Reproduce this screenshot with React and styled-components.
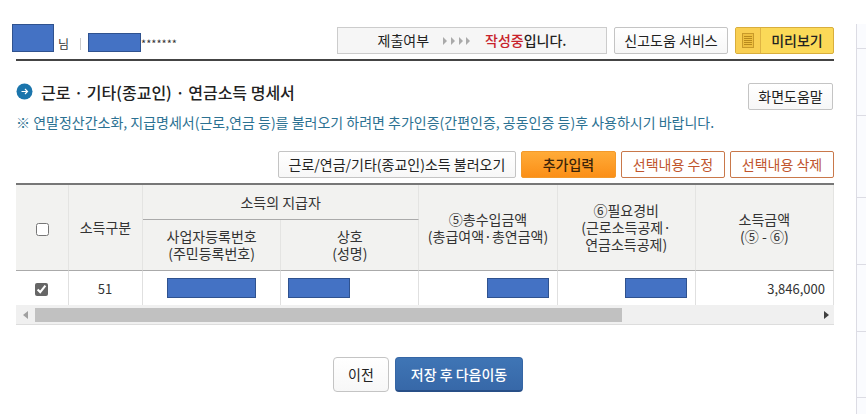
import React from "react";
import styled, { createGlobalStyle } from "styled-components";

const sideRows = [25, 67, 82, 67, 67, 66];

const App = () => {
  return (
    <>
      <GlobalStyle />
      <Page>
        <Main>
          <Header>
            <User>
              <Masked width={42} height={28} />
              <UserName>님</UserName>
              <Divider />
              <Masked width={53} height={19} />
              <Stars>*******</Stars>
            </User>
            <HeaderTools>
              <Status>
                <span>제출여부</span>
                <Arrows viewBox="0 0 28 8" aria-hidden="true">
                  <path d="M0 0l4 4-4 4zM8 0l4 4-4 4zM16 0l4 4-4 4zM23 0l4 4-4 4z" />
                </Arrows>
                <strong>
                  <em>작성중</em>입니다.
                </strong>
              </Status>
              <Button width={114}>신고도움 서비스</Button>
              <PreviewButton>
                <PreviewIcon>
                  <svg width="12" height="15" viewBox="0 0 12 15">
                    <rect x=".5" y=".5" width="11" height="14" fill="#efc040" stroke="#c99a2a" />
                    <path d="M2 3.5h8M2 5.5h8M2 7.5h8M2 9.5h8M2 11.5h8" stroke="#b98a1c" />
                  </svg>
                </PreviewIcon>
                <PreviewText>미리보기</PreviewText>
              </PreviewButton>
            </HeaderTools>
          </Header>

          <TitleRow>
            <svg width="17" height="17" viewBox="0 0 17 17" aria-hidden="true">
              <circle cx="8.5" cy="8.5" r="8" fill="#1b75ac" />
              <path
                d="M5.5 8.5h6M9 6l2.5 2.5L9 11"
                fill="none"
                stroke="#fff"
                strokeWidth="1.2"
              />
            </svg>
            <Title>근로 · 기타(종교인) · 연금소득 명세서</Title>
            <Button width={85}>화면도움말</Button>
          </TitleRow>
          <Notice>
            ※ 연말정산간소화, 지급명세서(근로,연금 등)를 불러오기 하려면
            추가인증(간편인증, 공동인증 등)후 사용하시기 바랍니다.
          </Notice>

          <Actions>
            <Button width={238}>근로/연금/기타(종교인)소득 불러오기</Button>
            <AddButton width={95}>추가입력</AddButton>
            <OutlineButton width={104}>선택내용 수정</OutlineButton>
            <OutlineButton width={104}>선택내용 삭제</OutlineButton>
          </Actions>

          <Table>
            <colgroup>
              <CheckCol />
              <TypeCol />
              <col span="5" />
            </colgroup>
            <thead>
              <tr>
                <HeadCell rowSpan="2">
                  <Checkbox aria-label="전체 선택" />
                </HeadCell>
                <HeadCell rowSpan="2">소득구분</HeadCell>
                <GroupCell colSpan="2">소득의 지급자</GroupCell>
                <HeadCell rowSpan="2">
                  ⑤총수입금액
                  <br />
                  (총급여액·총연금액)
                </HeadCell>
                <HeadCell rowSpan="2">
                  ⑥필요경비
                  <br />
                  (근로소득공제·
                  <br />
                  연금소득공제)
                </HeadCell>
                <HeadCell rowSpan="2">
                  소득금액
                  <br />
                  (⑤ - ⑥)
                </HeadCell>
              </tr>
              <tr>
                <HeadCell>
                  사업자등록번호
                  <br />
                  (주민등록번호)
                </HeadCell>
                <HeadCell>
                  상호
                  <br />
                  (성명)
                </HeadCell>
              </tr>
            </thead>
            <tbody>
              <tr>
                <Cell>
                  <Checkbox defaultChecked aria-label="51 선택" />
                </Cell>
                <Cell>51</Cell>
                <Cell>
                  <Masked width={89} height={20} />
                </Cell>
                <Cell align="left">
                  <Masked width={62} height={20} />
                </Cell>
                <Cell align="right">
                  <Masked width={62} height={20} />
                </Cell>
                <Cell align="right">
                  <Masked width={62} height={20} />
                </Cell>
                <Cell align="right">3,846,000</Cell>
              </tr>
            </tbody>
          </Table>
          <ScrollBar>
            <ScrollArrow viewBox="0 0 5 8" fill="#a0a0a0" aria-hidden="true">
              <path d="M5 0v8L0 4z" />
            </ScrollArrow>
            <Track>
              <Thumb />
            </Track>
            <ScrollArrow viewBox="0 0 5 8" fill="#404040" aria-hidden="true">
              <path d="M0 0v8l5-4z" />
            </ScrollArrow>
          </ScrollBar>

          <Footer>
            <PrevButton width={56}>이전</PrevButton>
            <SaveButton width={128}>저장 후 다음이동</SaveButton>
          </Footer>
        </Main>
        <Side>
          {sideRows.map((height, i) => (
            <SideRow key={i} height={height} />
          ))}
        </Side>
      </Page>
    </>
  );
};

export default App;

const GlobalStyle = createGlobalStyle`
  * {
    box-sizing: border-box;
  }

  body {
    margin: 0;
    background: #fff;
    color: #333;
    font-family: "Noto Sans CJK KR", sans-serif;
    font-size: 14px;
    line-height: 17px;
  }

  button {
    font: inherit;
    cursor: pointer;
  }
`;

const Page = styled.div`
  display: flex;
  min-height: 100vh;
  padding-top: 24px;
`;

const Main = styled.main`
  flex: 1;
  min-width: 0;
  padding: 0 22px 20px 16px;
`;

const Header = styled.header`
  display: flex;
  justify-content: space-between;
  align-items: flex-start;
  height: 37px;
  border-bottom: 2px solid #444;
`;

const User = styled.div`
  display: flex;
  align-items: flex-end;
  margin-left: -4px;
`;

const Masked = styled.span`
  display: inline-block;
  width: ${({ width }) => width}px;
  height: ${({ height }) => height}px;
  background: #4472c4;
  border: 1px solid #2f528f;
  vertical-align: middle;
`;

const UserName = styled.span`
  padding-left: 4px;
  font-size: 12px;
`;

const Divider = styled.span`
  width: 1px;
  height: 12px;
  margin: 0 7px 2px 11px;
  background: #ccc;
`;

const Stars = styled.span`
  font-size: 11px;
`;

const HeaderTools = styled.div`
  display: flex;
  gap: 7px;
  padding-top: 3px;
`;

const Status = styled.div`
  display: flex;
  justify-content: center;
  align-items: center;
  gap: 14px;
  width: 270px;
  height: 27px;
  background: #f6f6f6;
  border: 1px solid #ccc;
  color: #222;

  strong {
    font-weight: 500;
  }

  em {
    color: #c8232c;
    font-style: normal;
  }
`;

const Arrows = styled.svg`
  width: 28px;
  height: 8px;
  fill: #aaa;
`;

const Button = styled.button.attrs({ type: "button" })`
  display: flex;
  justify-content: center;
  align-items: center;
  width: ${({ width }) => width}px;
  height: 27px;
  padding: 0;
  background: linear-gradient(#fff, #f7f7f7);
  border: 1px solid #c4c4c4;
  border-radius: 2px;
  color: #222;
  white-space: nowrap;
`;

const PreviewButton = styled(Button)`
  width: 99px;
  justify-content: flex-start;
  align-items: stretch;
  background: #fbd958;
  border-color: #d9ae3c;
`;

const PreviewIcon = styled.span`
  display: flex;
  justify-content: center;
  align-items: center;
  width: 25px;
  background: #f9cf52;
  border-right: 1px solid #dfb443;
`;

const PreviewText = styled.span`
  display: flex;
  flex: 1;
  justify-content: center;
  align-items: center;
  font-weight: 500;
`;

const TitleRow = styled.div`
  display: flex;
  align-items: center;
  padding: 21px 1px 0 0;

  svg {
    margin-bottom: 10px;
  }
`;

const Title = styled.h1`
  flex: 1;
  margin: 0 0 8px;
  padding-left: 8px;
  color: #222;
  font-size: 16px;
  font-weight: 500;
  line-height: 20px;
`;

const Notice = styled.p`
  margin: 4px 0 0;
  color: #2b7192;
`;

const Actions = styled.div`
  display: flex;
  justify-content: flex-end;
  gap: 5px;
  padding: 20px 0 5px;
`;

const AddButton = styled(Button)`
  background: linear-gradient(#ffab38, #fb8f17);
  border-color: #f39a2b;
  color: #3c2408;
  font-weight: 500;
`;

const OutlineButton = styled(Button)`
  background: #fff;
  border-color: #c9784a;
  color: #c0552d;
`;

const Table = styled.table`
  width: 100%;
  table-layout: fixed;
  border-spacing: 0;
  border-top: 2px solid #777;
`;

const CheckCol = styled.col`
  width: 53px;
`;

const TypeCol = styled.col`
  width: 74px;
`;

const HeadCell = styled.th`
  height: 51px;
  padding: 0;
  background: #f2f2f0;
  border-right: 1px solid #e4e4e2;
  border-bottom: 1px solid #aaa;
  font-weight: 400;
  white-space: nowrap;
`;

const GroupCell = styled(HeadCell)`
  height: 35px;
`;

const Cell = styled.td`
  height: 34px;
  padding: 0 8px 0 7px;
  border-right: 1px solid #e0e0e0;
  font-size: 13px;
  text-align: ${({ align }) => align || "center"};
`;

const Checkbox = styled.input.attrs({ type: "checkbox" })`
  width: 13px;
  height: 13px;
  margin: 0;
  accent-color: #666;
  vertical-align: middle;
`;

const ScrollBar = styled.div`
  display: flex;
  align-items: center;
  justify-content: space-between;
  height: 20px;
  padding: 0 5px 0 7px;
  background: #f0f0f0;
  border-bottom: 1px solid #ddd;
`;

const ScrollArrow = styled.svg`
  width: 5px;
  height: 8px;
`;

const Track = styled.div`
  flex: 1;
  margin: 0 7px;
`;

const Thumb = styled.div`
  width: 75%;
  height: 14px;
  background: #c1c1c1;
`;

const Footer = styled.footer`
  display: flex;
  justify-content: center;
  gap: 6px;
  padding: 32px 0 0 6px;
`;

const PrevButton = styled(Button)`
  height: 35px;
  border-radius: 4px;
`;

const SaveButton = styled(Button)`
  height: 35px;
  background: linear-gradient(#3f75b5, #3768a8);
  border-color: #3566a5;
  border-bottom: 2px solid #284f87;
  border-radius: 4px;
  color: #fff;
  font-weight: 500;
`;

const Side = styled.aside`
  width: 10px;
  background: #fafbfe;
  border-left: 1px solid #dcdce4;
`;

const SideRow = styled.div`
  height: ${({ height }) => height}px;
  border-bottom: 1px solid #dcdce4;
`;
